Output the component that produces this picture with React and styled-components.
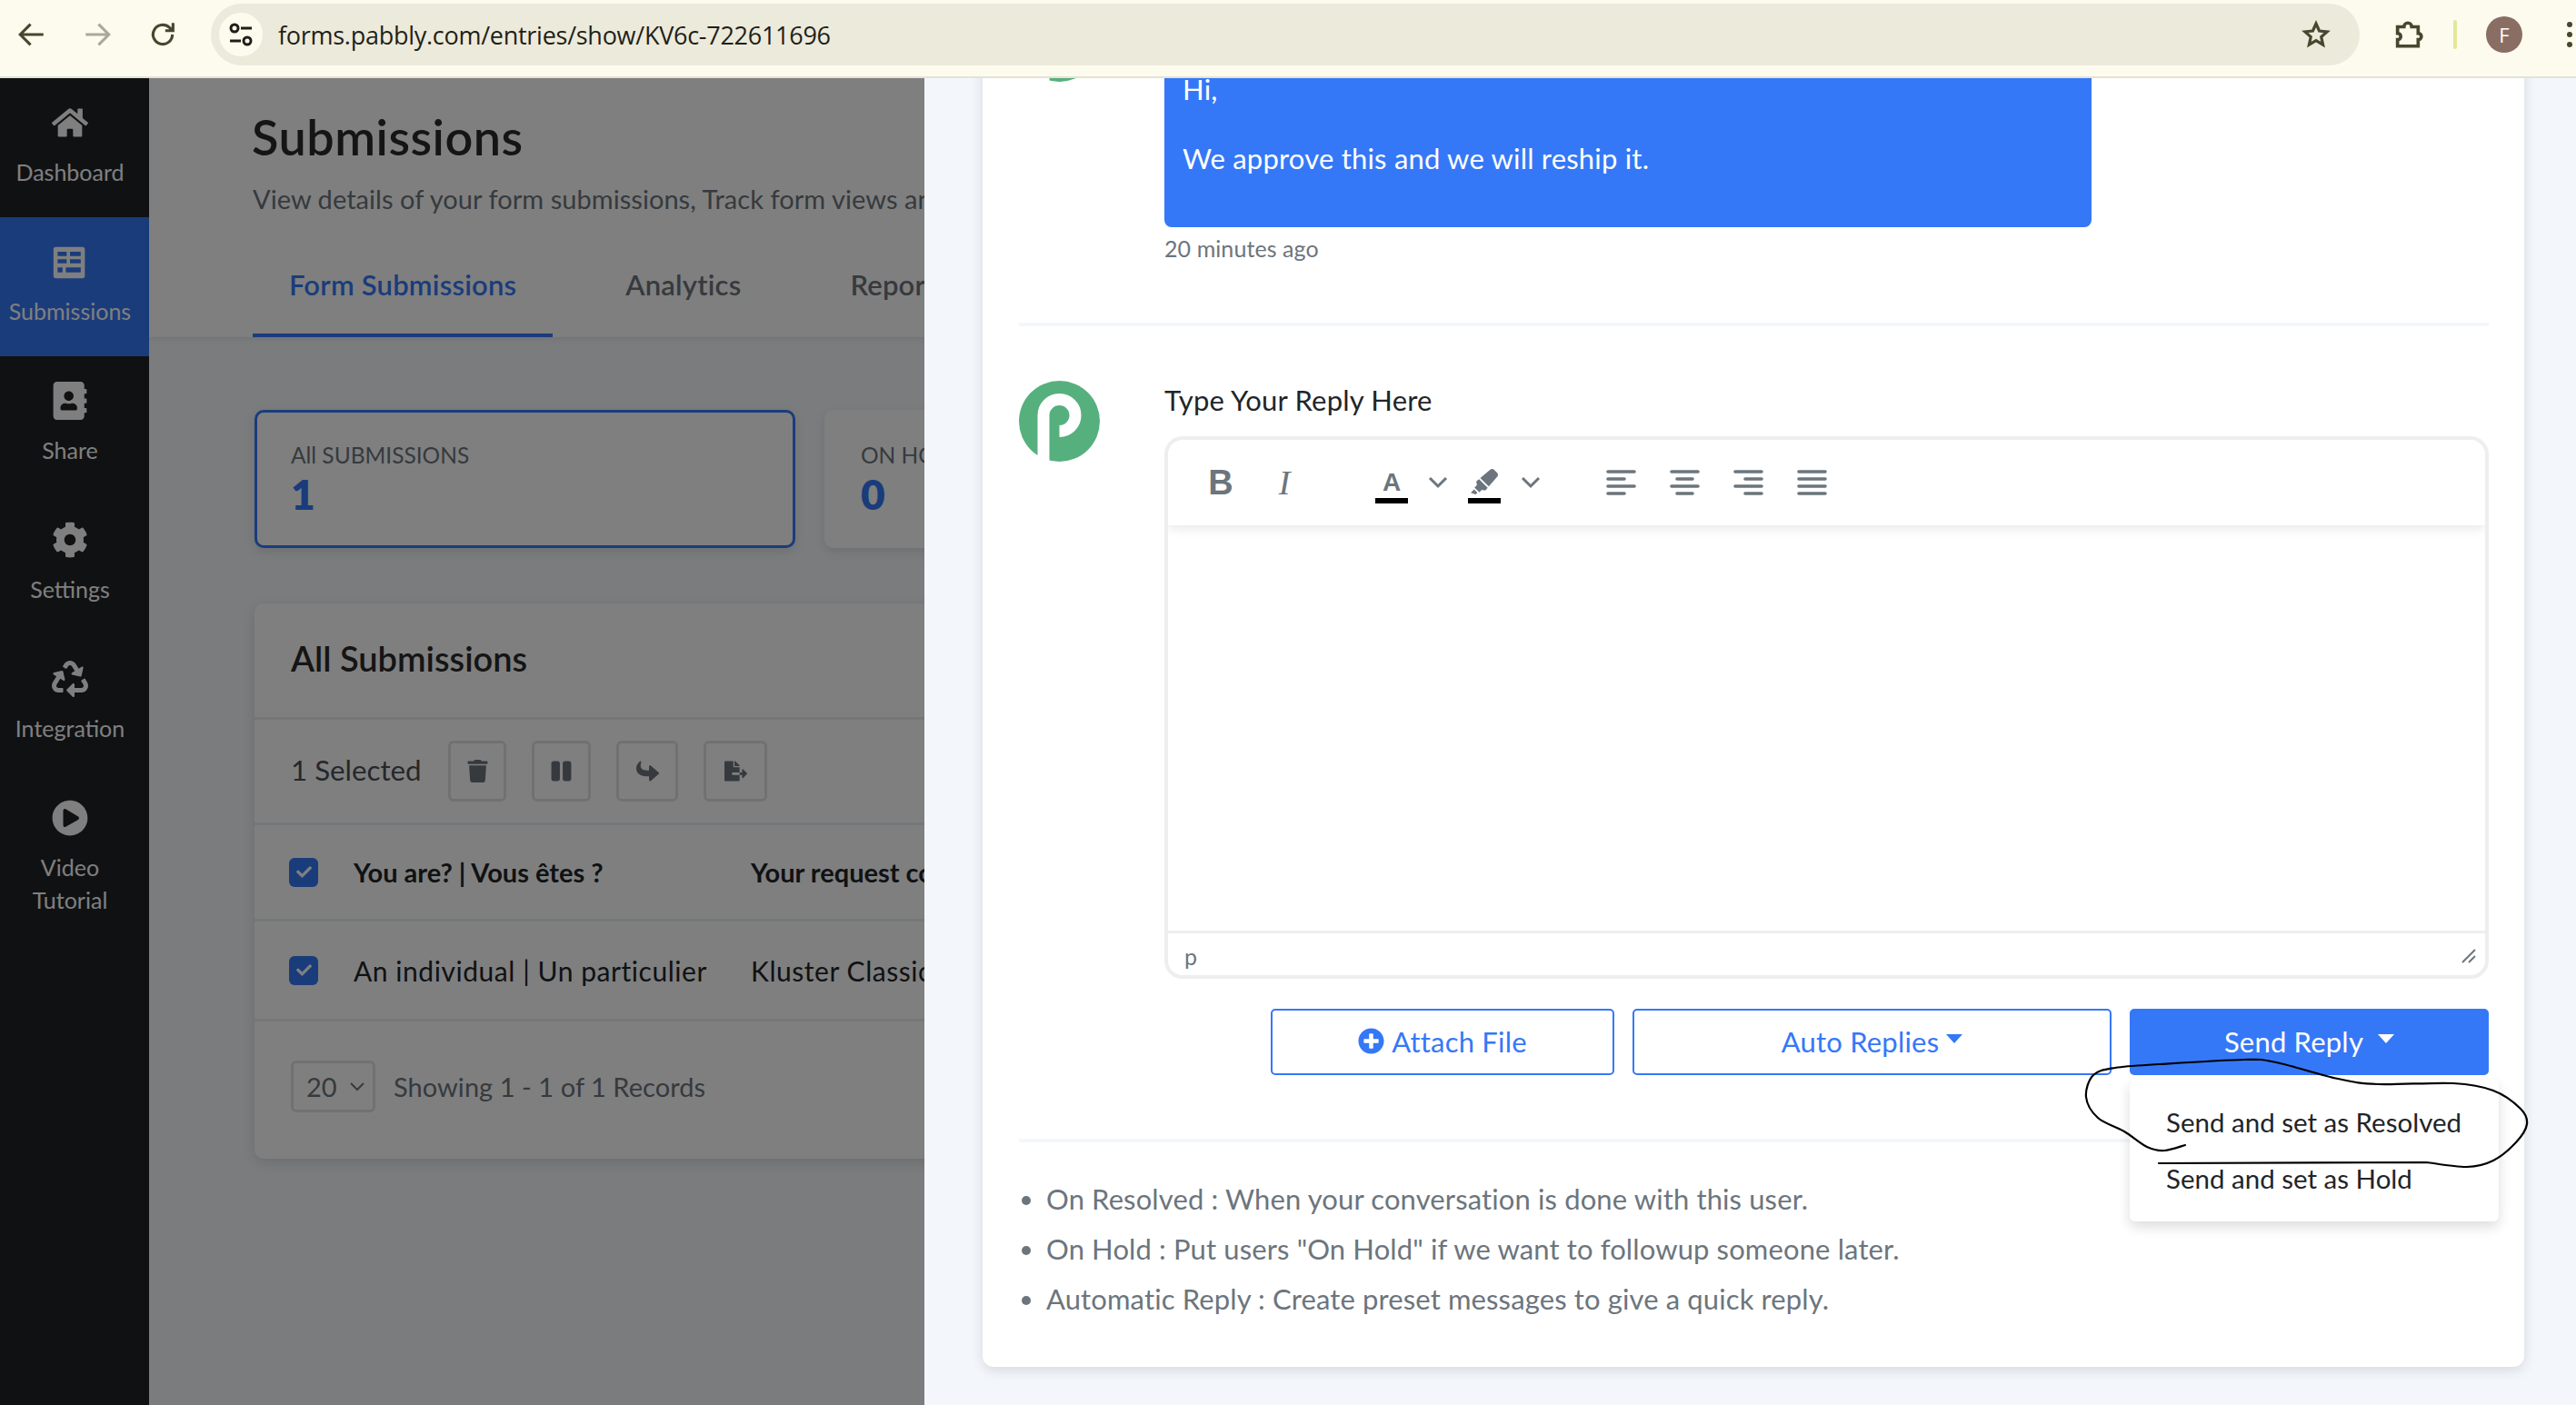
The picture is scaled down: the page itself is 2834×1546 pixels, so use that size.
import React from "react";
import styled, { createGlobalStyle } from "styled-components";
import {
  FaHome,
  FaAddressBook,
  FaCog,
  FaRecycle,
  FaPlayCircle,
  FaTrash,
  FaPause,
  FaShare,
  FaFileExport,
  FaPlusCircle,
  FaCheck,
  FaHighlighter,
} from "react-icons/fa";

const BLUE = "#3578f7";
const FONT = '"Lato", "Open Sans", sans-serif';

const Global = createGlobalStyle`
  html, body { margin: 0; padding: 0; background: #f3f7fb; }
  * { box-sizing: border-box; }
  body { font-family: ${FONT}; color: #212529; overflow: hidden; }
`;

const Root = styled.div`
  position: relative;
  width: 2834px;
  height: 1546px;
  display: flex;
  flex-direction: column;
  overflow: hidden;
`;

/* browser chrome */
const ChromeBar = styled.div`
  flex: none;
  height: 86px;
  display: flex;
  align-items: flex-start;
  background: #fdfbee;
  border-bottom: 2px solid #e3e3d6;
  position: relative;
  z-index: 5;
`;
const NavIcons = styled.div`
  width: 232px;
  height: 76px;
  flex: none;
  display: flex;
  align-items: center;
  padding-left: 18px;
  gap: 38px;
`;
const Omni = styled.div`
  width: 2364px;
  height: 68px;
  margin-top: 4px;
  flex: none;
  border-radius: 34px;
  background: #eceada;
  display: flex;
  align-items: center;
  padding: 0 32px 0 9px;
`;
const SiteInfo = styled.div`
  width: 48px;
  height: 48px;
  border-radius: 50%;
  background: #fdfbee;
  display: flex;
  align-items: center;
  justify-content: center;
  flex: none;
`;
const Url = styled.div`
  margin-left: 17px;
  flex: 1;
  font-family: "Open Sans", sans-serif;
  font-size: 27px;
  letter-spacing: -0.27px;
  color: #1f1f1a;
`;
const ChromeRight = styled.div`
  flex: 1;
  height: 76px;
  display: flex;
  align-items: center;
  padding-left: 36px;
`;
const Divider = styled.div`
  width: 4px;
  height: 32px;
  border-radius: 2px;
  background: #e3e79a;
  margin-left: 33px;
`;
const Profile = styled.div`
  width: 40px;
  height: 40px;
  border-radius: 50%;
  background: #8a6e64;
  color: #fff;
  margin-left: 32px;
  font-size: 22px;
  display: flex;
  align-items: center;
  justify-content: center;
  font-family: "Open Sans", sans-serif;
`;
const Dots = styled.div`
  margin-left: 49px;
  display: flex;
  flex-direction: column;
  gap: 5px;
  span {
    width: 6px;
    height: 6px;
    border-radius: 50%;
    background: #47472f;
  }
`;

const Body = styled.div`
  flex: 1;
  display: flex;
  min-height: 0;
`;

/* page behind the modal */
const BackPage = styled.div`
  position: relative;
  width: 1017px;
  flex: none;
  display: flex;
  overflow: hidden;
  background: #f5f8fb;
`;
const Dim = styled.div`
  position: absolute;
  inset: 0;
  background: rgba(0, 0, 0, 0.5);
`;
const Sidebar = styled.div`
  width: 164px;
  flex: none;
  background: #202226;
`;
const NavItem = styled.div`
  height: 153px;
  padding: 28px 10px 0 0;
  display: flex;
  flex-direction: column;
  align-items: center;
  color: #fff;
  background: ${(p) => (p.$active ? BLUE : "transparent")};
  svg {
    flex: none;
    width: 40px;
    height: 42px;
  }
`;
const NavLabel = styled.div`
  margin-top: 15px;
  width: 150px;
  flex: none;
  font-size: 25px;
  line-height: 36px;
  text-align: center;
`;
const VideoLabel = styled(NavLabel)`
  width: 110px;
`;
const Main = styled.div`
  width: 1100px;
  flex: none;
`;
const PageHead = styled.div`
  background: #fff;
  height: 285px;
  padding: 34px 0 0 114px;
  box-shadow: 0 2px 6px rgba(0, 0, 0, 0.08);
`;
const Title = styled.h1`
  margin: 0;
  margin-left: -1px;
  font-size: 54px;
  line-height: 62px;
  font-weight: 600;
  letter-spacing: 0.5px;
  color: #2a2a2a;
`;
const Subtitle = styled.div`
  margin-top: 17px;
  font-size: 29px;
  line-height: 40px;
  letter-spacing: 0.05px;
  color: #6c757d;
  white-space: nowrap;
`;
const Tabs = styled.div`
  display: flex;
  margin-top: 40px;
`;
const Tab = styled.div`
  height: 92px;
  padding: 11px 40px 0;
  font-size: 31px;
  line-height: 46px;
  font-weight: 600;
  letter-spacing: 0.2px;
  white-space: nowrap;
  color: ${(p) => (p.$active ? BLUE : "#6c757d")};
  border-bottom: 4px solid ${(p) => (p.$active ? BLUE : "transparent")};
  margin-right: 40px;
`;
const Content = styled.div`
  padding: 80px 0 0 116px;
`;
const Stats = styled.div`
  display: flex;
  gap: 32px;
`;
const Stat = styled.div`
  width: 595px;
  height: 152px;
  flex: none;
  padding: 30px 37px;
  border-radius: 10px;
  background: #fff;
  border: 3px solid ${(p) => (p.$active ? BLUE : "#fff")};
  box-shadow: 0 4px 12px rgba(0, 0, 0, 0.1);
`;
const StatLabel = styled.div`
  font-size: 24.5px;
  line-height: 34px;
  color: #6c757d;
`;
const StatValue = styled.div`
  font-size: 46px;
  line-height: 52px;
  font-weight: 800;
  color: ${BLUE};
`;
const TableCard = styled.div`
  margin-top: 61px;
  width: 1100px;
  height: 611px;
  background: #fff;
  border-radius: 10px;
  box-shadow: 0 4px 14px rgba(0, 0, 0, 0.12);
`;
const TableTitle = styled.div`
  height: 128px;
  padding: 37px 40px 0;
  font-size: 38px;
  line-height: 46px;
  font-weight: 600;
  color: #2a2a2a;
  border-bottom: 3px solid #e9eef5;
`;
const ActionRow = styled.div`
  height: 116px;
  padding: 0 40px;
  display: flex;
  align-items: center;
  border-bottom: 3px solid #e9eef5;
`;
const Selected = styled.div`
  font-size: 31.3px;
  width: 173px;
  padding-bottom: 4px;
  white-space: nowrap;
  color: #495057;
`;
const ActionBtn = styled.div`
  width: ${(p) => p.$w}px;
  height: 67px;
  margin-right: 28px;
  display: flex;
  align-items: center;
  justify-content: center;
  border: 3px solid #dee2e6;
  border-radius: 6px;
  color: #6c757d;
  svg {
    width: 25px;
    height: 25px;
  }
`;
const ForwardIcon = styled(FaShare)`
  transform: scaleY(-1);
`;
const Row = styled.div`
  height: ${(p) => p.$h}px;
  padding: 0 38px;
  display: flex;
  align-items: center;
  white-space: nowrap;
  font-size: ${(p) => (p.$head ? 29 : 30)}px;
  letter-spacing: ${(p) => (p.$head ? 0 : 0.55)}px;
  font-weight: ${(p) => (p.$head ? 700 : 400)};
  color: #212529;
  border-bottom: 3px solid #e9eef5;
`;
const Check = styled.div`
  width: 32px;
  height: 32px;
  flex: none;
  border-radius: 6px;
  background: ${BLUE};
  color: #fff;
  display: flex;
  align-items: center;
  justify-content: center;
  svg {
    width: 17px;
    height: 17px;
  }
`;
const Cell = styled.div`
  flex: none;
  width: ${(p) => p.$w}px;
  padding-left: ${(p) => p.$pl || 0}px;
`;
const Pager = styled.div`
  padding: 43px 40px;
  display: flex;
  align-items: center;
  color: #6c757d;
  font-size: 29px;
  letter-spacing: 0.05px;
`;
const PageSelect = styled.div`
  width: 93px;
  height: 57px;
  margin-right: 20px;
  border: 3px solid #dee2e6;
  border-radius: 6px;
  padding-left: 14px;
  display: flex;
  align-items: center;
  gap: 14px;
`;

/* modal panel */
const Panel = styled.div`
  flex: 1;
  min-width: 0;
  padding: 0 57px 0 64px;
  background: #f3f7fb;
  overflow: hidden;
`;
const Card = styled.div`
  margin-top: -100px;
  height: 1518px;
  padding: 15px 39px 45px 40px;
  background: #fff;
  border-radius: 12px;
  box-shadow: 0 4px 14px rgba(0, 0, 0, 0.12);
`;
const Thread = styled.div`
  display: flex;
  gap: 71px;
`;
const Avatar = styled.svg`
  width: 89px;
  height: 89px;
  flex: none;
`;
const Column = styled.div`
  flex: 1;
  min-width: 0;
`;
const Bubble = styled.div`
  width: 1020px;
  height: 249px;
  padding: 78px 20px 0;
  background: ${BLUE};
  color: #fff;
  font-size: 31px;
  letter-spacing: 0.2px;
  line-height: 38px;
  border-radius: 0 0 8px 8px;
`;
const Line = styled.div`
  min-height: 38px;
`;
const TimeAgo = styled.div`
  margin-top: 6px;
  font-size: 25px;
  letter-spacing: 0.08px;
  line-height: 34px;
  color: #6c757d;
`;
const Hr = styled.div`
  height: 4px;
  margin: ${(p) => p.$m};
  background: #f3f7fd;
`;
const ReplyLabel = styled.div`
  padding-top: 2px;
  font-size: 31px;
  letter-spacing: 0.2px;
  line-height: 38px;
  color: #212529;
`;
const Editor = styled.div`
  margin-top: 21px;
  height: 597px;
  border: 4px solid #eeeeee;
  border-radius: 20px;
  display: flex;
  flex-direction: column;
  overflow: hidden;
`;
const Toolbar = styled.div`
  height: 94px;
  flex: none;
  padding-left: 43px;
  display: flex;
  align-items: center;
  color: #6c757d;
  box-shadow: 0 3px 12px rgba(0, 0, 0, 0.1);
`;
const ToolSlot = styled.div`
  width: ${(p) => p.$w}px;
  margin-left: ${(p) => p.$ml || 0}px;
  flex: none;
  display: flex;
  justify-content: center;
  align-items: center;
`;
const BoldGlyph = styled.span`
  font: 700 38px "Liberation Sans", sans-serif;
`;
const ItalicGlyph = styled.span`
  font: italic 400 38px "Liberation Serif", serif;
`;
const ColorTool = styled.div`
  width: 36px;
  height: 46px;
  display: flex;
  flex-direction: column;
  align-items: center;
  justify-content: flex-end;
  border-bottom: 6px solid #000;
  font: 700 28px/34px "Liberation Sans", sans-serif;
  svg {
    width: 30px;
    height: 32px;
    margin-bottom: 2px;
  }
`;
const EditArea = styled.div`
  flex: 1;
`;
const StatusBar = styled.div`
  height: 49px;
  flex: none;
  padding: 3px 10px 0 18px;
  display: flex;
  align-items: center;
  justify-content: space-between;
  border-top: 3px solid #eeeeee;
  font-size: 25px;
  color: #6c757d;
`;
const Actions = styled.div`
  margin-top: 33px;
  display: flex;
  justify-content: flex-end;
  gap: 20px;
`;
const Btn = styled.div`
  width: ${(p) => p.$w}px;
  height: 73px;
  padding-bottom: 2px;
  display: flex;
  align-items: center;
  justify-content: center;
  gap: 8px;
  border: 2px solid ${BLUE};
  border-radius: 5px;
  font-size: 31px;
  letter-spacing: 0.2px;
  color: ${(p) => (p.$primary ? "#fff" : BLUE)};
  background: ${(p) => (p.$primary ? BLUE : "#fff")};
  svg {
    width: 29px;
    height: 29px;
  }
`;
const Caret = styled.span`
  width: 0;
  height: 0;
  margin-left: ${(p) => p.$ml || 0}px;
  margin-top: -6px;
  border-left: 9px solid transparent;
  border-right: 9px solid transparent;
  border-top: 10px solid currentColor;
`;
const SendWrap = styled.div`
  position: relative;
`;
const Menu = styled.div`
  position: absolute;
  top: 78px;
  left: 0;
  width: 406px;
  padding: 16px 0;
  background: #fff;
  border-radius: 6px;
  box-shadow: 0 6px 14px rgba(0, 0, 0, 0.14);
  z-index: 2;
`;
const MenuItem = styled.div`
  height: 62px;
  padding-left: 40px;
  padding-bottom: 2px;
  display: flex;
  align-items: center;
  font-size: 29.5px;
  color: #212529;
`;
const Notes = styled.ul`
  margin: 35px 0 0;
  padding: 0 0 0 30px;
  list-style: disc;
  font-size: 31px;
  letter-spacing: 0.12px;
  line-height: 55px;
  color: #6c757d;
`;
const Scribble = styled.svg`
  position: absolute;
  left: 2280px;
  top: 1150px;
  width: 520px;
  height: 150px;
  z-index: 6;
  fill: none;
  stroke: #000;
  stroke-width: 2.2;
  stroke-linecap: round;
`;

const scribblePoints = [
  [2404, 1260], [2381, 1266], [2362, 1262], [2337, 1245], [2308, 1230], [2295, 1207],
  [2303, 1183], [2327, 1175], [2376, 1171], [2469, 1166], [2504, 1169], [2572, 1187],
  [2616, 1193], [2699, 1192], [2743, 1200], [2773, 1220], [2780, 1237], [2768, 1257],
  [2743, 1277], [2714, 1284], [2670, 1279],
];

// catmull-rom through the traced points, then the straight stroke at the end
function scribblePath(pts) {
  let d = `M${pts[0][0]} ${pts[0][1]}`;
  for (let i = 0; i < pts.length - 1; i++) {
    const p0 = pts[i - 1] || pts[i];
    const p1 = pts[i];
    const p2 = pts[i + 1];
    const p3 = pts[i + 2] || p2;
    d += `C${p1[0] + (p2[0] - p0[0]) / 6} ${p1[1] + (p2[1] - p0[1]) / 6} ${p2[0] - (p3[0] - p1[0]) / 6} ${p2[1] - (p3[1] - p1[1]) / 6} ${p2[0]} ${p2[1]}`;
  }
  return d + "L2375 1280";
}

const PLogo = () => (
  <Avatar viewBox="0 0 89 89">
    <circle cx="44.5" cy="44.5" r="44.5" fill="#56b07d" />
    <path
      d="M27 87V38a17.500 17.500 0 1 1 17.500 17.500"
      fill="none"
      stroke="#fff"
      strokeWidth="13"
    />
  </Avatar>
);

const Chevron = () => (
  <svg width="22" height="14" viewBox="0 0 22 14" fill="none" stroke="#6c757d" strokeWidth="3">
    <path d="M2 2l9 9 9-9" />
  </svg>
);

// 4 bars, the x/width pair of each one decides the alignment
const AlignIcon = ({ bars }) => (
  <svg width="33" height="28" viewBox="0 0 33 28" stroke="#6c757d" strokeWidth="3.6" strokeLinecap="round">
    {bars.map(([a, b], i) => (
      <line key={i} x1={a} x2={b} y1={2 + i * 8} y2={2 + i * 8} />
    ))}
  </svg>
);

const TableIcon = () => (
  <svg viewBox="-2 -5 44 46" fill="currentColor">
    <path
      fillRule="evenodd"
      d="M3 0h32a3 3 0 0 1 3 3v32a3 3 0 0 1-3 3H3a3 3 0 0 1-3-3V3a3 3 0 0 1 3-3zM5 6v5h11V6zm15 0v5h13V6zM5 15v5h11v-5zm15 0v5h13v-5zM5 25v6h6v-6zm10 0v6h18v-6z"
    />
  </svg>
);

const navItems = [
  { icon: <FaHome />, label: "Dashboard" },
  { icon: <TableIcon />, label: "Submissions", active: true },
  { icon: <FaAddressBook />, label: "Share" },
  { icon: <FaCog />, label: "Settings" },
  { icon: <FaRecycle />, label: "Integration" },
];

const notes = [
  "On Resolved : When your conversation is done with this user.",
  'On Hold : Put users "On Hold" if we want to followup someone later.',
  "Automatic Reply : Create preset messages to give a quick reply.",
];

export default function App() {
  return (
    <Root>
      <Global />
      <ChromeBar>
        <NavIcons>
          <svg width="34" height="34" viewBox="0 0 24 24" fill="none" stroke="#47472f" strokeWidth="2.2">
            <path d="M21 12H4M11 4l-8 8 8 8" />
          </svg>
          <svg width="34" height="34" viewBox="0 0 24 24" fill="none" stroke="#a9a99a" strokeWidth="2.2">
            <path d="M3 12h17M13 4l8 8-8 8" />
          </svg>
          <svg width="34" height="34" viewBox="0 0 24 24" fill="none" stroke="#47472f" strokeWidth="2.2">
            <path d="M19.500 12a7.500 7.500 0 1 1-2.400-5.500L20 9M20 3v6h-6" />
          </svg>
        </NavIcons>
        <Omni>
          <SiteInfo>
            <svg width="28" height="30" viewBox="0 0 28 30" fill="none" stroke="#1f1f1a" strokeWidth="3">
              <circle cx="7" cy="8" r="4" />
              <path d="M14 8h12M2 22h12" />
              <circle cx="21" cy="22" r="4" />
            </svg>
          </SiteInfo>
          <Url>forms.pabbly.com/entries/show/KV6c-722611696</Url>
          <svg width="32" height="32" viewBox="0 0 24 24" fill="none" stroke="#47472f" strokeWidth="2.4">
            <path d="M12 3l2.700 6 6.400.7-4.800 4.300 1.400 6.400L12 17l-5.700 3.400 1.400-6.400L2.900 9.700 9.300 9z" />
          </svg>
        </Omni>
        <ChromeRight>
          <svg width="34" height="34" viewBox="0 0 24 24" fill="none" stroke="#47472f" strokeWidth="2.6">
            <path d="M4 6h5a3 3 0 0 1 6 0h5v5a2.500 2.500 0 0 1 0 5v5H4v-5a2.500 2.500 0 0 0 0-5z" />
          </svg>
          <Divider />
          <Profile>F</Profile>
          <Dots>
            <span />
            <span />
            <span />
          </Dots>
        </ChromeRight>
      </ChromeBar>

      <Body>
        <BackPage>
          <Sidebar>
            {navItems.map((item) => (
              <NavItem key={item.label} $active={item.active}>
                {item.icon}
                <NavLabel>{item.label}</NavLabel>
              </NavItem>
            ))}
            <NavItem>
              <FaPlayCircle />
              <VideoLabel>Video Tutorial</VideoLabel>
            </NavItem>
          </Sidebar>
          <Main>
            <PageHead>
              <Title>Submissions</Title>
              <Subtitle>View details of your form submissions, Track form views and conversions</Subtitle>
              <Tabs>
                <Tab $active>Form Submissions</Tab>
                <Tab>Analytics</Tab>
                <Tab>Reports</Tab>
              </Tabs>
            </PageHead>
            <Content>
              <Stats>
                <Stat $active>
                  <StatLabel>All SUBMISSIONS</StatLabel>
                  <StatValue>1</StatValue>
                </Stat>
                <Stat>
                  <StatLabel>ON HOLD</StatLabel>
                  <StatValue>0</StatValue>
                </Stat>
              </Stats>
              <TableCard>
                <TableTitle>All Submissions</TableTitle>
                <ActionRow>
                  <Selected>1 Selected</Selected>
                  <ActionBtn $w={64}><FaTrash /></ActionBtn>
                  <ActionBtn $w={65}><FaPause /></ActionBtn>
                  <ActionBtn $w={68}><ForwardIcon /></ActionBtn>
                  <ActionBtn $w={70}><FaFileExport /></ActionBtn>
                </ActionRow>
                <Row $h={106} $head>
                  <Check><FaCheck /></Check>
                  <Cell $w={476} $pl={39}>You are? | Vous êtes ?</Cell>
                  <Cell $w={500}>Your request concerns</Cell>
                </Row>
                <Row $h={110}>
                  <Check><FaCheck /></Check>
                  <Cell $w={476} $pl={39}>An individual | Un particulier</Cell>
                  <Cell $w={500}>Kluster Classic</Cell>
                </Row>
                <Pager>
                  <PageSelect>
                    20
                    <svg width="16" height="10" viewBox="0 0 16 10" fill="none" stroke="#6c757d" strokeWidth="2">
                      <path d="M1 1l7 7 7-7" />
                    </svg>
                  </PageSelect>
                  Showing 1 - 1 of 1 Records
                </Pager>
              </TableCard>
            </Content>
          </Main>
          <Dim />
        </BackPage>

        <Panel>
          <Card>
            <Thread>
              <PLogo />
              <Column>
                <Bubble>
                  <Line>Hi,</Line>
                  <Line />
                  <Line>We approve this and we will reship it.</Line>
                </Bubble>
                <TimeAgo>20 minutes ago</TimeAgo>
              </Column>
            </Thread>
            <Hr $m="65px 0 60px" />
            <Thread>
              <PLogo />
              <Column>
                <ReplyLabel>Type Your Reply Here</ReplyLabel>
                <Editor>
                  <Toolbar>
                    <ToolSlot $w={30}><BoldGlyph>B</BoldGlyph></ToolSlot>
                    <ToolSlot $w={110}><ItalicGlyph>I</ItalicGlyph></ToolSlot>
                    <ToolSlot $w={36} $ml={45}><ColorTool>A</ColorTool></ToolSlot>
                    <ToolSlot $w={66}><Chevron /></ToolSlot>
                    <ToolSlot $w={36}><ColorTool><FaHighlighter /></ColorTool></ToolSlot>
                    <ToolSlot $w={66}><Chevron /></ToolSlot>
                    <ToolSlot $w={70} $ml={31}><AlignIcon bars={[[2, 31], [2, 20], [2, 31], [2, 20]]} /></ToolSlot>
                    <ToolSlot $w={70}><AlignIcon bars={[[2, 31], [8, 25], [2, 31], [8, 25]]} /></ToolSlot>
                    <ToolSlot $w={70}><AlignIcon bars={[[2, 31], [13, 31], [2, 31], [13, 31]]} /></ToolSlot>
                    <ToolSlot $w={70}><AlignIcon bars={[[2, 31], [2, 31], [2, 31], [2, 31]]} /></ToolSlot>
                  </Toolbar>
                  <EditArea />
                  <StatusBar>
                    p
                    <svg width="16" height="16" viewBox="0 0 16 16" stroke="#6c757d" strokeWidth="2">
                      <path d="M1 15L15 1M8 15l7-7" />
                    </svg>
                  </StatusBar>
                </Editor>
                <Actions>
                  <Btn $w={378}><FaPlusCircle />Attach File</Btn>
                  <Btn $w={527}>Auto Replies<Caret /></Btn>
                  <SendWrap>
                    <Btn $w={395} $primary>Send Reply<Caret $ml={8} /></Btn>
                    <Menu>
                      <MenuItem>Send and set as Resolved</MenuItem>
                      <MenuItem>Send and set as Hold</MenuItem>
                    </Menu>
                  </SendWrap>
                </Actions>
              </Column>
            </Thread>
            <Hr $m="70px 0 0" />
            <Notes>
              {notes.map((n) => (
                <li key={n}>{n}</li>
              ))}
            </Notes>
          </Card>
        </Panel>
      </Body>

      <Scribble viewBox="2280 1150 520 150">
        <path d={scribblePath(scribblePoints)} />
      </Scribble>
    </Root>
  );
}
